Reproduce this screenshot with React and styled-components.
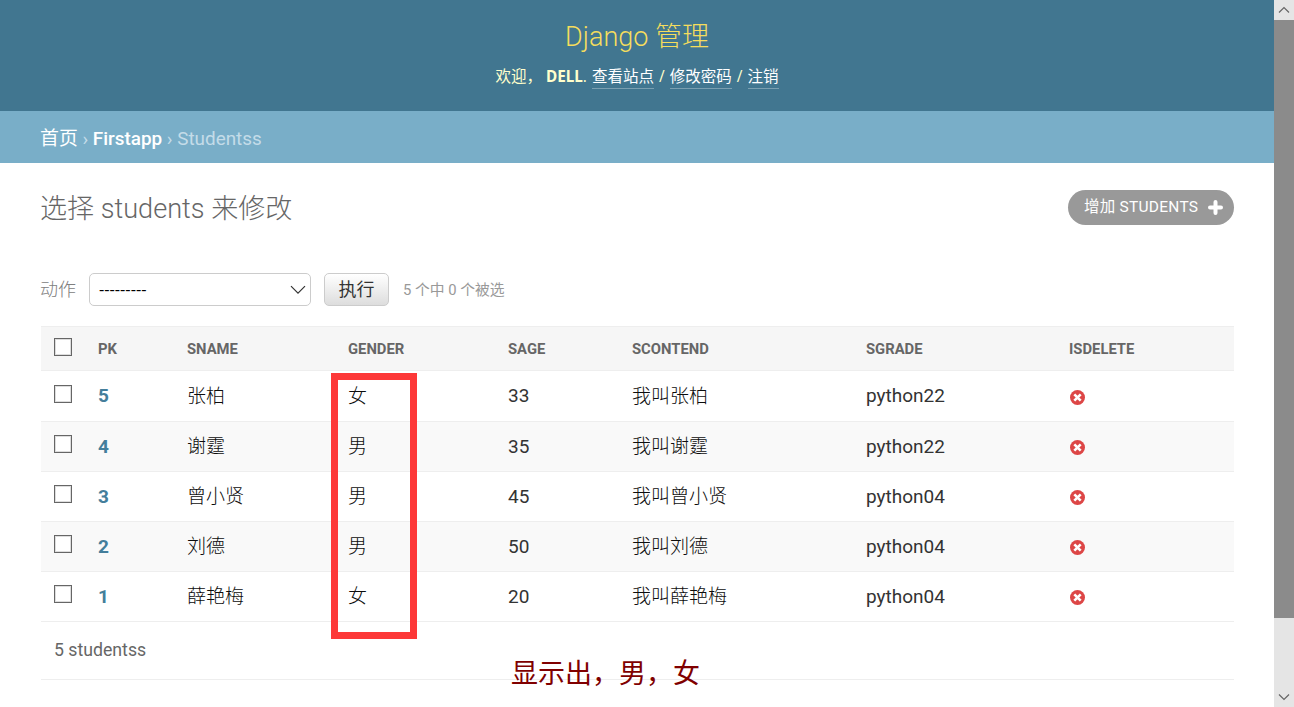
import React, { useState } from 'react'
import styled, { createGlobalStyle } from 'styled-components'

const columns = [
  { name: 'pk', width: 89 },
  { name: 'sname', width: 161 },
  { name: 'gender', width: 160 },
  { name: 'sage', width: 124 },
  { name: 'scontend', width: 234 },
  { name: 'sgrade', width: 203 },
  { name: 'isdelete', width: 177 },
]

const students = [
  { pk: 5, sname: '张柏', gender: '女', sage: 33, scontend: '我叫张柏', sgrade: 'python22' },
  { pk: 4, sname: '谢霆', gender: '男', sage: 35, scontend: '我叫谢霆', sgrade: 'python22' },
  { pk: 3, sname: '曾小贤', gender: '男', sage: 45, scontend: '我叫曾小贤', sgrade: 'python04' },
  { pk: 2, sname: '刘德', gender: '男', sage: 50, scontend: '我叫刘德', sgrade: 'python04' },
  { pk: 1, sname: '薛艳梅', gender: '女', sage: 20, scontend: '我叫薛艳梅', sgrade: 'python04' },
]

const IconNo = () => (
  <NoSvg viewBox="0 0 15 15" aria-label="False">
    <circle cx="7.5" cy="7.5" r="7.5" fill="#dd4646" />
    <path d="M4.3 4.3 L10.7 10.7 M10.7 4.3 L4.3 10.7" stroke="#fff" strokeWidth="2.6" />
  </NoSvg>
)

const App = () => {
  const [selected, setSelected] = useState([])

  const toggle = (pk) => {
    setSelected(selected.includes(pk) ? selected.filter((s) => s !== pk) : [...selected, pk])
  }

  const toggleAll = () => {
    setSelected(selected.length === students.length ? [] : students.map((s) => s.pk))
  }

  return (
    <Window>
      <GlobalStyle />
      <Page>
        <Header>
          <SiteName>Django 管理</SiteName>
          <UserTools>
            <Welcome>欢迎，</Welcome>
            <strong>DELL</strong>. <UserLink href="#">查看站点</UserLink> /{' '}
            <UserLink href="#">修改密码</UserLink> / <UserLink href="#">注销</UserLink>
          </UserTools>
        </Header>
        <Breadcrumbs>
          <Crumb href="#">首页</Crumb> › <Crumb href="#" $medium>Firstapp</Crumb> › Studentss
        </Breadcrumbs>
        <Content>
          <TitleRow>
            <Title>选择 students 来修改</Title>
            <AddLink href="#">
              增加 students
              <PlusSvg viewBox="0 0 15 15">
                <path d="M7.5 2 V13 M2 7.5 H13" />
              </PlusSvg>
            </AddLink>
          </TitleRow>
          <Actions>
            <Label>动作</Label>
            <Select type="button">
              ---------
              <ChevronSvg viewBox="0 0 16 10">
                <path d="M1 1.2 L8 8.2 L15 1.2" />
              </ChevronSvg>
            </Select>
            <RunButton type="button">执行</RunButton>
            <Counter>5 个中 {selected.length} 个被选</Counter>
          </Actions>
          <TableWrapper>
            <Table>
              <thead>
                <HeadRow>
                  <CheckHead>
                    <Checkbox checked={selected.length === students.length} onChange={toggleAll} />
                  </CheckHead>
                  {columns.map((col) => (
                    <HeadCell key={col.name} $width={col.width}>{col.name}</HeadCell>
                  ))}
                </HeadRow>
              </thead>
              <tbody>
                {students.map((s) => (
                  <Row key={s.pk}>
                    <Cell>
                      <Checkbox checked={selected.includes(s.pk)} onChange={() => toggle(s.pk)} />
                    </Cell>
                    <Cell><PkLink href="#">{s.pk}</PkLink></Cell>
                    <HanCell>{s.sname}</HanCell>
                    <HanCell>{s.gender}</HanCell>
                    <Cell>{s.sage}</Cell>
                    <HanCell>{s.scontend}</HanCell>
                    <Cell>{s.sgrade}</Cell>
                    <Cell><IconNo /></Cell>
                  </Row>
                ))}
              </tbody>
            </Table>
            <Highlight />
          </TableWrapper>
          <Paginator>
            5 studentss
            <Note>显示出，男，女</Note>
          </Paginator>
        </Content>
      </Page>
      <Scrollbar>
        <ArrowSvg viewBox="0 0 20 20"><path d="M5 12.5 L10 7.5 L15 12.5" /></ArrowSvg>
        <Thumb />
        <ArrowSvg viewBox="0 0 20 20"><path d="M5 7.5 L10 12.5 L15 7.5" /></ArrowSvg>
      </Scrollbar>
    </Window>
  )
}

export default App

const GlobalStyle = createGlobalStyle`
  * {
    box-sizing: border-box;
  }
  body {
    margin: 0;
    overflow: hidden;
    background: #fff;
    color: #333;
    font-family: Roboto, "Noto Sans CJK SC", sans-serif;
    font-size: 19px;
  }
  a {
    text-decoration: none;
  }
`
const Window = styled.div`
  display: flex;
  height: 707px;
  overflow: hidden;
`
const Page = styled.div`
  flex: 1;
  min-width: 0;
`
const Header = styled.header`
  display: flex;
  flex-direction: column;
  align-items: center;
  height: 111px;
  padding-top: 17px;
  background: #417690;
  color: #ffc;
`
const SiteName = styled.h1`
  margin: 0;
  color: #f5dd5d;
  font-size: 27px;
  font-weight: 300;
  line-height: 41px;
`
const UserTools = styled.div`
  margin-top: 7px;
  font-family: "Open Sans", "Noto Sans CJK SC", sans-serif;
  font-size: 15.5px;
  line-height: 23px;
  white-space: nowrap;
  word-spacing: 1px;
  strong {
    font-family: "Noto Sans", sans-serif;
    font-size: 15.3px;
  }
`
const Welcome = styled.span`
  margin-right: 4px;
`
const UserLink = styled.a`
  display: inline-block;
  height: 24px;
  border-bottom: 1px solid #7a9fb1;
  color: #fff;
`
const Breadcrumbs = styled.div`
  height: 52px;
  padding-left: 40px;
  background: #79aec8;
  color: #c4dce8;
  font-size: 18.9px;
  line-height: 56px;
`
const Crumb = styled.a`
  color: #fff;
  font-weight: ${(props) => (props.$medium ? 500 : 400)};
`
const Content = styled.main`
  padding: 27px 40px 0;
`
const TitleRow = styled.div`
  display: flex;
  justify-content: space-between;
  align-items: flex-start;
  height: 36px;
`
const Title = styled.h2`
  margin: 0;
  color: #666;
  font-size: 27.1px;
  font-weight: 300;
  line-height: 38px;
`
const AddLink = styled.a`
  display: flex;
  align-items: center;
  justify-content: space-between;
  width: 166px;
  height: 35px;
  padding: 0 11px 5px 16px;
  border-radius: 18px;
  background: #999;
  color: #fff;
  font-size: 15.5px;
  letter-spacing: 0.25px;
  text-transform: uppercase;
`
const PlusSvg = styled.svg`
  width: 15px;
  height: 15px;
  margin-top: 4px;
  fill: none;
  stroke: #fff;
  stroke-width: 4;
  stroke-linecap: round;
`
const Actions = styled.div`
  display: flex;
  align-items: center;
  height: 33px;
  margin-top: 47px;
  color: #999;
  font-size: 18px;
`
const Label = styled.label`
  padding-bottom: 3px;
  color: #808080;
  font-weight: 300;
`
const Select = styled.button`
  display: flex;
  align-items: center;
  justify-content: space-between;
  width: 222px;
  height: 33px;
  margin-left: 13px;
  padding: 0 4px 3px 9px;
  border: 1px solid #ccc;
  border-radius: 5px;
  background: #fff;
  color: #000;
  font-family: "Open Sans", sans-serif;
  font-size: 16.4px;
`
const ChevronSvg = styled.svg`
  width: 16px;
  height: 10px;
  margin-top: 3px;
  fill: none;
  stroke: #333;
  stroke-width: 1.2;
`
const RunButton = styled.button`
  width: 65px;
  height: 33px;
  margin-left: 13px;
  padding: 0 0 3px;
  border: 1px solid #ccc;
  border-radius: 5px;
  background: linear-gradient(#fff, #ddd);
  color: #333;
  font-family: inherit;
  font-size: 18px;
`
const Counter = styled.span`
  margin-left: 14px;
  padding-bottom: 2px;
  font-size: 14.8px;
`
const TableWrapper = styled.div`
  position: relative;
  margin: 20px 0 0 1px;
`
const Table = styled.table`
  width: 1193px;
  border-collapse: separate;
  border-spacing: 0;
  table-layout: fixed;
`
const HeadRow = styled.tr`
  height: 45px;
  background: #f6f6f6;
`
const HeadCell = styled.th`
  width: ${(props) => props.$width}px;
  padding: 0 12px;
  border-top: 1px solid #eee;
  border-bottom: 1px solid #eee;
  color: #666;
  font-size: 14.8px;
  font-weight: 700;
  text-align: left;
  text-transform: uppercase;
`
const CheckHead = styled(HeadCell)`
  width: 45px;
  padding-top: 1px;
`
const Row = styled.tr`
  height: 50px;
  background: #fff;
  &:first-child {
    height: 51px;
  }
  &:nth-child(even) {
    background: #f9f9f9;
  }
`
const Cell = styled.td`
  padding: 0 12px;
  border-bottom: 1px solid #eee;
  line-height: 28px;
  white-space: nowrap;
`
const HanCell = styled(Cell)`
  padding-top: 1px;
  color: #0c0c0c;
  font-weight: 300;
`
const PkLink = styled.a`
  color: #447e9b;
  font-weight: 700;
`
const Checkbox = styled.input.attrs({ type: 'checkbox' })`
  appearance: none;
  display: block;
  width: 18px;
  height: 18px;
  margin: 0 0 5px 1px;
  border: 1px solid #666;
  background: #fff;
  box-shadow: inset 0 0 0 1px #ddd;
  &:checked {
    background: #447e9b;
  }
`
const NoSvg = styled.svg`
  display: block;
  width: 15px;
  height: 15px;
  margin: 2px 0 0 1px;
`
const Highlight = styled.div`
  position: absolute;
  left: 290px;
  top: 47px;
  width: 86px;
  height: 266px;
  border: 7px solid #fd3838;
`
const Paginator = styled.div`
  position: relative;
  height: 58px;
  margin-left: 1px;
  padding-left: 13px;
  border-bottom: 1px solid #eee;
  color: #666;
  font-size: 17.7px;
  line-height: 56px;
`
const Note = styled.span`
  position: absolute;
  left: 470px;
  top: 32px;
  color: #800000;
  font-size: 27px;
  line-height: 40px;
  white-space: nowrap;
`
const Scrollbar = styled.div`
  display: flex;
  flex-direction: column;
  width: 20px;
  height: 707px;
  background: #e5e5e5;
`
const ArrowSvg = styled.svg`
  width: 20px;
  height: 20px;
  fill: none;
  stroke: #666;
  stroke-width: 1.2;
`
const Thumb = styled.div`
  height: 598px;
  margin-bottom: auto;
  background: #8b8b8b;
`
